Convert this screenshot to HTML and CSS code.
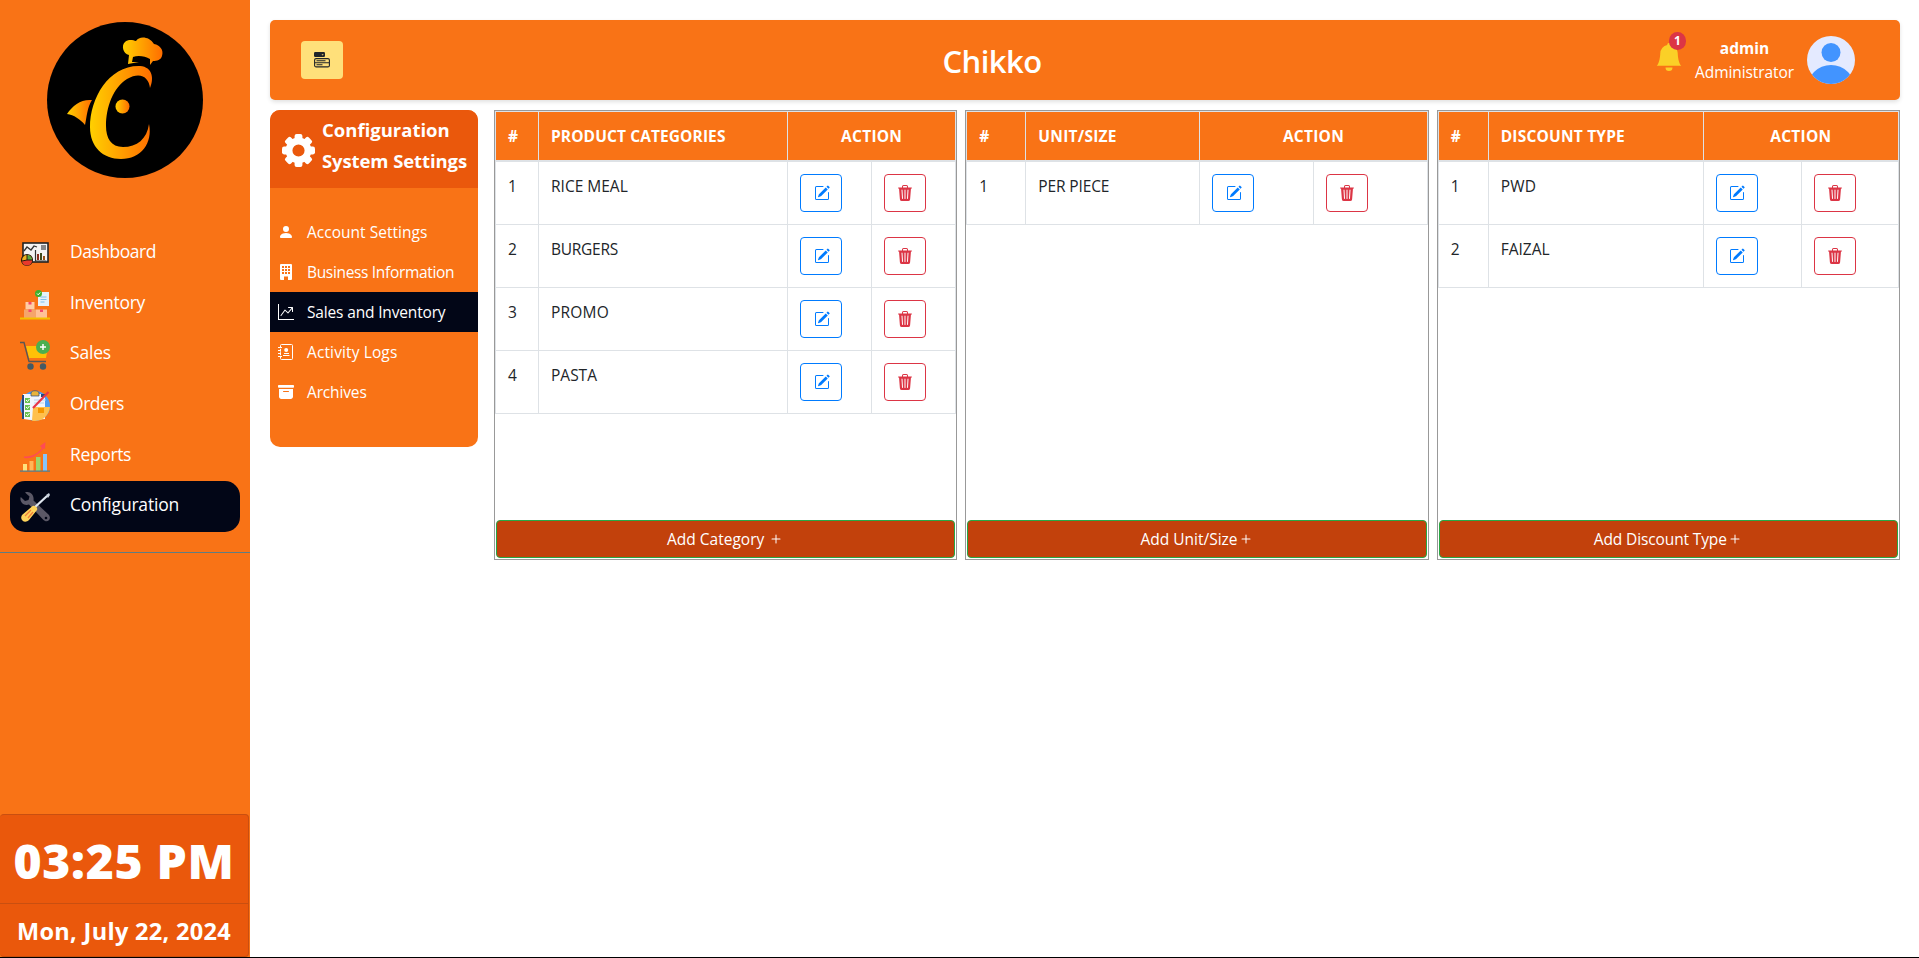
FILE: index.html
```html
<!DOCTYPE html>
<html lang="en">
<head>
<meta charset="utf-8">
<title>Chikko</title>
<link rel="stylesheet" href="styles.css">
</head>
<body>
<svg class="sprite" width="0" height="0" aria-hidden="true">
  <symbol id="edit" viewBox="0 0 16 16"><path d="M15.502 1.94a.5.5 0 0 1 0 .706L14.459 3.69l-2-2L13.502.646a.5.5 0 0 1 .707 0l1.293 1.293zm-1.75 2.456-2-2L4.939 9.21a.5.5 0 0 0-.121.196l-.805 2.414a.25.25 0 0 0 .316.316l2.414-.805a.5.5 0 0 0 .196-.12l6.813-6.814z"/><path d="M1 13.5A1.5 1.5 0 0 0 2.5 15h11a1.5 1.5 0 0 0 1.5-1.5v-6a.5.5 0 0 0-1 0v6a.5.5 0 0 1-.5.5h-11a.5.5 0 0 1-.5-.5v-11a.5.5 0 0 1 .5-.5H9a.5.5 0 0 0 0-1H2.5A1.5 1.5 0 0 0 1 2.5v11z"/></symbol>
  <symbol id="trash" viewBox="0 0 16 16"><path d="M11 1.5v1h3.5a.5.5 0 0 1 0 1h-.538l-.853 10.66A2 2 0 0 1 11.115 16h-6.23a2 2 0 0 1-1.994-1.84L2.038 3.5H1.5a.5.5 0 0 1 0-1H5v-1A1.5 1.5 0 0 1 6.5 0h3A1.5 1.5 0 0 1 11 1.5Zm-5 0v1h4v-1a.5.5 0 0 0-.5-.5h-3a.5.5 0 0 0-.5.5ZM4.5 5.029l.5 8.5a.5.5 0 1 0 .998-.06l-.5-8.5a.5.5 0 1 0-.998.06Zm6.53-.528a.5.5 0 0 0-.528.47l-.5 8.5a.5.5 0 0 0 .998.058l.5-8.5a.5.5 0 0 0-.47-.528ZM8 4.5a.5.5 0 0 0-.5.5v8.5a.5.5 0 0 0 1 0V5a.5.5 0 0 0-.5-.5Z"/></symbol>
  <symbol id="plus" viewBox="0 0 16 16"><path d="M8 3.5a.5.5 0 0 1 .5.5v3.5H12a.5.5 0 0 1 0 1H8.500V12a.5.5 0 0 1-1 0V8.500H4a.5.5 0 0 1 0-1h3.500V4a.5.5 0 0 1 .5-.5z"/></symbol>
</svg>
<div class="shell">
  <aside class="sidebar">
    <svg class="logo" viewBox="0 0 156 156">
      <defs>
        <linearGradient id="g"><stop offset="0" stop-color="#ffd000"/><stop offset="1" stop-color="#ff6d00"/></linearGradient>
      </defs>
      <circle cx="78" cy="78" r="78"/>
      <path fill="url(#g)" d="M103 66C107 57 106 45 93 44C62 43 43 76 43 105C43 125 56 137 74 137C94 137 106 121 102 102C100 117 90 125 76 125C64 125 59 116 59 104C59 85 66 66 80 57C94 49 102 56 103 66Z"/>
      <path fill="url(#g)" d="M20 92C26 83 34 77 45 78C40 86 40 94 38 103C33 97 27 93 20 92Z"/>
      <circle cx="75.500" cy="84.500" r="7" fill="url(#g)"/>
      <path fill="url(#g)" d="M82 33C76 32 74 23 78 20C81 17 86 18 89 19C92 14 102 14 107 22C113 23 117 28 115 34C114 38 110 39 106 39L103 43L103 37C98 34 91 33 86 35L85 40L92 40L81 42Z"/>
    </svg>
    <nav class="menu">
      <a class="menu-item"><svg viewBox="0 0 30 30"><rect x="3" y="4" width="25" height="19" fill="#f4f3f3" stroke="#222" stroke-width="1.600"/><path d="M4 12l3-4 4 3 3-4 3 1" fill="none" stroke="#333" stroke-width="1.300"/><path d="M21 6h5v5h-5z" fill="#888"/><path d="M15.500 11v11h11" fill="none" stroke="#333" stroke-width="1.200"/><path d="M17 15h2v6h-2z" fill="#8b2c20"/><path d="M20 14h2v7h-2z" fill="#3d4a1c"/><path d="M23 17h2v4h-2z" fill="#995018"/><circle cx="7" cy="21" r="5.500" fill="#f0b21d" stroke="#2a1a10" stroke-width="1.200"/><path d="M7 21V16a5 5 0 0 1 5 5z" fill="#57a83f"/><path d="M2 22l5-1h5a5 5 0 0 1-10 1z" fill="#e8392c"/><path d="M7 16v5h5M7 21l-5 1" fill="none" stroke="#2a1a10"/></svg><span class="t-dashboard">Dashboard</span></a>
      <a class="menu-item"><svg viewBox="0 0 30 30"><path d="M18 2h11v14H18z" fill="#e4f1fb"/><path d="M20.500 7h6M20.500 9.500h6M20.500 12h4" stroke="#7fc0ee" stroke-width="1.100"/><circle cx="18.500" cy="3.500" r="3.500" fill="#3fb02c"/><path d="M17 3.500l1.200 1.300 2-2.300" fill="none" stroke="#fff"/><path d="M5.500 12h9v7.500h-9z" fill="#ffcda4"/><path d="M4 19.500h12V28H4z" fill="#f5a56b"/><path d="M16 19.500h11V28H16z" fill="#ffc196"/><path d="M8.500 12h3v2.500h-3zM8.500 19.500h3V22h-3zM20 19.500h3V22h-3z" fill="#f4476b"/><path d="M0 27.500h30v2H0z" fill="#f5c000"/></svg><span class="t-inventory">Inventory</span></a>
      <a class="menu-item"><svg viewBox="0 0 30 30"><path d="M6 6h22l-2 12H9z" fill="#ffc107"/><path d="M0 2.500h4l5 19h17" fill="none" stroke="#5c5752" stroke-width="1.400"/><circle cx="10.500" cy="26.500" r="3.200" fill="#455a64"/><circle cx="23" cy="26.500" r="3.200" fill="#455a64"/><circle cx="23" cy="7" r="7" fill="#4caf50"/><path d="M20 7h6M23 4v6" stroke="#fff" stroke-width="1.500"/></svg><span class="t-sales">Sales</span></a>
      <a class="menu-item"><svg viewBox="0 0 30 30"><circle cx="15" cy="15" r="15" fill="#4d9cf5"/><path d="M3 3h22v25l-14 1-8-1z" fill="#f2f6fc"/><path d="M2 4h2v24H2zM21 3h4v3h-4z" fill="#29497c"/><path d="M13 16h16.900A15 15 0 0 1 12 29.700z" fill="#ffc04d"/><path d="M18 17h6v5h-6z" fill="#f59600"/><path d="M14 9h12M14 12h10" stroke="#b5d0ee"/><path d="M5 7h5v5H5zM5 14h5v5H5zM5 21h5v5H5z" fill="#6ac04f"/><path d="M6 9l1.500 1.500L9.500 8M6 16l1.500 1.500L9.500 15M6 23l1.500 1.500L9.500 22" fill="none" stroke="#fff"/><path d="M11 5V2c0-3 8-3 8 0v3z" fill="#e9b43b" stroke="#29497c" stroke-width=".7"/><path d="M13 17L28.500 1" stroke="#e83648" stroke-width="2.200"/></svg><span class="t-orders">Orders</span></a>
      <a class="menu-item"><svg viewBox="0 0 30 30"><path d="M3 22h4v7H3z" fill="#ffe07a"/><path d="M9.500 19h4v10h-4z" fill="#ffb657"/><path d="M16 15h4.500v14H16z" fill="#9ed56b"/><path d="M23 12h4v17h-4z" fill="#87c5f7"/><path d="M0 28.500h30v1.200H0z" fill="#4b7f96"/><path d="M4 14.500C13 15 18 11 22 6L20 4l5.500-4-.5 7-1.500-.5C18 13 12 17 4 16z" fill="#ff4b55"/></svg><span class="t-reports">Reports</span></a>
      <a class="menu-item active"><svg viewBox="0 0 30 30"><path d="M5 .5L9.500 4.500 8.500 8 5 9 .8 5C-1 10 4 14.500 9 12.500L23 27.500c4 4.500 9.500-.5 5.500-5L13.500 8.500C14.500 3 10-1.500 5 .5z" fill="#5b5866"/><circle cx="26" cy="26" r="1.300" fill="#020617"/><path d="M14 16L27 4" stroke="#dfe6ef" stroke-width="2.200"/><path d="M26 3l3-2 1 2-2 3z" fill="#cbd3df"/><path d="M12 14.500C13.500 12.500 18.500 15.500 17 18L9 28c-4 4-10 0-7-5z" fill="#ffd45c"/><path d="M5 24l6-6M8 26l5-6" stroke="#ef7d3b" stroke-width="1.300"/></svg><span class="t-config">Configuration</span></a>
    </nav>
    <div class="clock">
      <div class="time"><span class="t-time">03:25 PM</span></div>
      <div class="date"><span class="t-date">Mon, July 22, 2024</span></div>
    </div>
  </aside>
  <main class="main">
    <header class="topbar">
      <button class="toggle"><svg viewBox="0 0 16 16"><rect x="0" y="0" width="11" height="5" rx="1.200"/><path d="M7.500 2.200h2.200L8.600 3.400z" fill="#ffe07a"/><rect x=".6" y="6.600" width="14.800" height="8.300" rx="1.500" fill="none" stroke="#212529" stroke-width="1.100"/><path d="M2.500 8.800h9M1 10.800h14M2.500 12.800h6" stroke="#212529" stroke-width="1.100"/></svg></button>
      <h1 class="brand"><span class="t-brand">Chikko</span></h1>
      <div class="user">
        <div class="bell"><svg viewBox="0 0 16 16"><path d="M8 16a2 2 0 0 0 2-2H6a2 2 0 0 0 2 2zm.995-14.901a1 1 0 1 0-1.990 0A5.002 5.002 0 0 0 3 6c0 1.098-.5 6-2 7h14c-1.500-1-2-5.902-2-7 0-2.420-1.720-4.440-4.005-4.901z"/></svg><span class="badge">1</span></div>
        <div class="who"><b class="t-admin">admin</b><span class="t-role">Administrator</span></div>
        <svg class="avatar" viewBox="0 0 48 48"><clipPath id="c"><circle cx="24" cy="24" r="24"/></clipPath><g clip-path="url(#c)"><path d="M0 0h48v48H0z" fill="#e4eaff"/><circle cx="24" cy="16.500" r="9.500" fill="#4294ff"/><circle cx="24" cy="53" r="24" fill="#4294ff"/></g></svg>
      </div>
    </header>
    <div class="content">
      <section class="settings">
        <div class="settings-head">
          <svg class="gear" viewBox="0 0 32 32"><circle cx="16" cy="16" r="9.200" fill="none" stroke="#fff" stroke-width="6.600"/><g fill="#fff"><rect id="tooth" x="12.200" y="0" width="7.600" height="7" rx="2"/><use href="#tooth" transform="rotate(45 16 16)"/><use href="#tooth" transform="rotate(90 16 16)"/><use href="#tooth" transform="rotate(135 16 16)"/><use href="#tooth" transform="rotate(180 16 16)"/><use href="#tooth" transform="rotate(225 16 16)"/><use href="#tooth" transform="rotate(270 16 16)"/><use href="#tooth" transform="rotate(315 16 16)"/></g></svg>
          <div class="settings-title"><span class="t-sc">Configuration</span><span class="t-ss">System Settings</span></div>
        </div>
        <ul class="settings-list">
          <li><svg viewBox="0 0 16 16"><path d="M3 14s-1 0-1-1 1-4 6-4 6 3 6 4-1 1-1 1H3Zm5-6a3 3 0 1 0 0-6 3 3 0 0 0 0 6Z"/></svg><span class="t-acc">Account Settings</span></li>
          <li><svg viewBox="0 0 16 16"><path fill-rule="evenodd" d="M3 0a1 1 0 0 0-1 1v14a1 1 0 0 0 1 1h3v-3.500h4V16h3a1 1 0 0 0 1-1V1a1 1 0 0 0-1-1H3ZM4 2h2v2H4zM7 2h2v2H7zM10 2h2v2h-2zM4 5h2v2H4zM7 5h2v2H7zM10 5h2v2h-2zM4 8h2v2H4zM7 8h2v2H7zM10 8h2v2h-2z"/></svg><span class="t-biz">Business Information</span></li>
          <li class="active"><svg viewBox="0 0 16 16"><path d="M0 0h1v15h15v1H0V0Zm10 3.500a.5.5 0 0 1 .5-.5h4a.5.5 0 0 1 .5.5v4a.5.5 0 0 1-1 0V4.900l-3.613 4.417a.5.5 0 0 1-.74.037L7.060 6.767l-3.656 5.027a.5.5 0 0 1-.808-.588l4-5.500a.5.5 0 0 1 .758-.06l2.609 2.610L13.445 4H10.500a.5.5 0 0 1-.5-.5Z"/></svg><span class="t-si">Sales and Inventory</span></li>
          <li><svg viewBox="0 0 16 16"><path d="M2.500 3V1.500a1 1 0 0 1 1-1h10a1 1 0 0 1 1 1v13a1 1 0 0 1-1 1h-10a1 1 0 0 1-1-1V13M2.500 4.800v1.500M2.500 7.300v1.500M2.500 9.800v1.500" fill="none" stroke="#fff"/><path d="M0 3.500h4M0 6.500h3M0 9.500h3M0 12.500h4M6 9.500h5M5 11.500h6.500" stroke="#fff"/><circle cx="8.200" cy="6" r="2"/></svg><span class="t-act">Activity Logs</span></li>
          <li><svg viewBox="0 0 16 16"><path fill-rule="evenodd" d="M12.643 15C13.979 15 15 13.845 15 12.500V5H1v7.500C1 13.845 2.021 15 3.357 15h9.286zM5.500 7h5a.5.5 0 0 1 0 1h-5a.5.5 0 0 1 0-1zM.8 1a.8.8 0 0 0-.8.8V3a.8.8 0 0 0 .8.8h14.400A.8.8 0 0 0 16 3V1.800a.8.8 0 0 0-.8-.8H.8z"/></svg><span class="t-arc">Archives</span></li>
        </ul>
      </section>
      <section class="panel">
        <table class="grid categories">
          <colgroup><col class="c1"><col class="c2"><col class="c3"><col></colgroup>
          <thead><tr><th>#</th><th><span class="t-pc">PRODUCT CATEGORIES</span></th><th colspan="2" class="center"><span class="t-action">ACTION</span></th></tr></thead>
          <tbody>
            <tr><td>1</td><td><span class="t-rice">RICE MEAL</span></td><td><button class="btn edit"><svg><use href="#edit"/></svg></button></td><td><button class="btn del"><svg><use href="#trash"/></svg></button></td></tr>
            <tr><td>2</td><td><span class="t-burg">BURGERS</span></td><td><button class="btn edit"><svg><use href="#edit"/></svg></button></td><td><button class="btn del"><svg><use href="#trash"/></svg></button></td></tr>
            <tr><td>3</td><td><span class="t-promo">PROMO</span></td><td><button class="btn edit"><svg><use href="#edit"/></svg></button></td><td><button class="btn del"><svg><use href="#trash"/></svg></button></td></tr>
            <tr><td>4</td><td><span class="t-pasta">PASTA</span></td><td><button class="btn edit"><svg><use href="#edit"/></svg></button></td><td><button class="btn del"><svg><use href="#trash"/></svg></button></td></tr>
          </tbody>
        </table>
        <button class="add spaced"><span class="t-addc">Add Category</span><svg><use href="#plus"/></svg></button>
      </section>
      <section class="panel">
        <table class="grid units">
          <colgroup><col class="c1"><col class="c2"><col class="c3"><col></colgroup>
          <thead><tr><th>#</th><th><span class="t-unit">UNIT/SIZE</span></th><th colspan="2" class="center"><span class="t-action">ACTION</span></th></tr></thead>
          <tbody>
            <tr><td>1</td><td><span class="t-per">PER PIECE</span></td><td><button class="btn edit"><svg><use href="#edit"/></svg></button></td><td><button class="btn del"><svg><use href="#trash"/></svg></button></td></tr>
          </tbody>
        </table>
        <button class="add"><span class="t-addu">Add Unit/Size</span><svg><use href="#plus"/></svg></button>
      </section>
      <section class="panel">
        <table class="grid discounts">
          <colgroup><col class="c1"><col class="c2"><col class="c3"><col></colgroup>
          <thead><tr><th>#</th><th><span class="t-disc">DISCOUNT TYPE</span></th><th colspan="2" class="center"><span class="t-action">ACTION</span></th></tr></thead>
          <tbody>
            <tr><td>1</td><td><span class="t-pwd">PWD</span></td><td><button class="btn edit"><svg><use href="#edit"/></svg></button></td><td><button class="btn del"><svg><use href="#trash"/></svg></button></td></tr>
            <tr><td>2</td><td><span class="t-faizal">FAIZAL</span></td><td><button class="btn edit"><svg><use href="#edit"/></svg></button></td><td><button class="btn del"><svg><use href="#trash"/></svg></button></td></tr>
          </tbody>
        </table>
        <button class="add"><span class="t-addd">Add Discount Type</span><svg><use href="#plus"/></svg></button>
      </section>
    </div>
  </main>
</div>
</body>
</html>
```
FILE: styles.css
```css
* { box-sizing: border-box; }
body { margin: 0; background: #fff; color: #212529; font: 15.5px/24px "Open Sans", "Noto Sans", sans-serif; }
h1, ul { margin: 0; padding: 0; }
button { font: inherit; cursor: pointer; }
.sprite { position: absolute; }
.shell { display: flex; height: 958px; border-bottom: 1px solid #000; overflow: hidden; }

.sidebar { width: 250px; flex: none; display: flex; flex-direction: column; background: #f97316; color: #fff; }
.logo { display: block; width: 156px; height: 156px; margin: 22px 0 0 47px; }
.menu { margin-top: 50px; padding: 0 10px 20px; border-bottom: 1px solid #5f7d83; font-size: 17.5px; }
.menu-item { display: flex; align-items: flex-start; height: 50.67px; padding: 11px 10px 0; border-radius: 15px; }
.menu-item svg { width: 30px; height: 30px; margin-right: 20px; overflow: visible; }
.menu-item.active { background: #020617; }
.clock { margin-top: auto; width: 249px; height: 143px; background: #ea580c; border: 1px solid #c94f10; border-left: 0; border-radius: 4px; }
.time { height: 89px; padding-top: 4px; display: flex; align-items: center; justify-content: center; border-bottom: 1px solid #c94f10; font-size: 48px; font-weight: 800; white-space: nowrap; }
.date { height: 53px; display: flex; align-items: center; justify-content: center; font-size: 23.5px; font-weight: 700; white-space: nowrap; }

.main { flex: 1; padding: 20px 19px 0 20px; min-width: 0; }
.topbar { display: flex; justify-content: space-between; align-items: center; height: 80px; padding: 0 45px 0 31px; background: #f97316; border-radius: 5px; box-shadow: 0 2px 4px rgba(0,0,0,.12); color: #fff; }
.toggle { display: flex; align-items: center; justify-content: center; width: 42px; height: 38px; padding: 0; border: 0; border-radius: 4px; background: #ffe07a; }
.toggle svg { width: 16px; height: 16px; fill: #212529; }
.brand { font-size: 31px; font-weight: 600; line-height: 40px; padding-top: 2px; }
.user { display: flex; justify-content: flex-end; align-items: center; padding-left: 14px; }
.bell { position: relative; width: 28px; height: 28px; margin: 0 12px 6px 0; }
.bell svg { display: block; width: 28px; height: 28px; fill: #fbd027; }
.badge { position: absolute; left: 14px; top: -11px; width: 17px; height: 18px; border-radius: 9px; background: #dc3545; font-size: 12px; line-height: 18px; font-weight: 700; text-align: center; }
.who { display: flex; flex-direction: column; align-items: center; }
.avatar { width: 48px; height: 48px; margin-left: 13px; }

.content { display: flex; align-items: flex-start; margin-top: 10px; }
.settings { width: 208px; height: 337px; flex: none; margin-right: 16px; border-radius: 10px; overflow: hidden; background: #f97316; color: #fff; }
.settings-head { display: flex; align-items: center; height: 78px; padding: 0 0 0 12px; background: #ea580c; }
.gear { width: 33px; height: 33px; margin: 2px 7px 0 0; }
.settings-title { display: flex; flex-direction: column; align-items: flex-start; font-size: 18.5px; font-weight: 700; line-height: 31px; margin-bottom: 8px; white-space: nowrap; }
.settings-list { list-style: none; padding-top: 24px; }
.settings-list li { display: flex; align-items: center; height: 40px; padding-left: 8px; white-space: nowrap; }
.settings-list svg { width: 16px; height: 16px; margin-right: 13px; fill: #fff; }
.settings-list .active { background: #020617; }

.panel { flex: 1; min-width: 0; height: 450px; display: flex; flex-direction: column; justify-content: space-between; border: 1px solid #999; }
.panel + .panel { margin-left: 8px; }
.grid { width: 100%; table-layout: fixed; border-collapse: collapse; }
.grid th, .grid td { border: 1px solid #dee2e6; padding: 12px; text-align: left; vertical-align: top; }
.grid th { background: #f97316; color: #fff; border-bottom-width: 2px; }
.grid .center { text-align: center; }
.categories .c1 { width: 43px; } .categories .c2 { width: 249px; } .categories .c3 { width: 84px; }
.units .c1 { width: 59px; } .units .c2 { width: 174px; } .units .c3 { width: 114px; }
.discounts .c1 { width: 50px; } .discounts .c2 { width: 215px; } .discounts .c3 { width: 98px; }
.btn { display: flex; align-items: center; justify-content: center; width: 42px; height: 38px; padding: 0; border-radius: 4px; background: #fff; }
.btn svg, .add svg { width: 16px; height: 16px; }
.edit { padding-left: 1px; border: 1px solid #007bff; fill: #007bff; }
.del { border: 1px solid #dc3545; fill: #dc3545; }
.add { display: flex; align-items: center; justify-content: center; height: 38px; margin: 0 1px 1px; padding: 0; border: 1px solid #28a745; border-radius: 4px; background: #c2410c; color: #fff; fill: #fff; }
.spaced svg { margin-left: 4px; }

/* Tracking per label */
.t-dashboard, .t-orders { letter-spacing: -.48px; }
.t-inventory { letter-spacing: -.29px; }
.t-sales, .t-config { letter-spacing: -.2px; }
.t-reports { letter-spacing: -.37px; }
.t-time { letter-spacing: .7px; }
.t-date { letter-spacing: .32px; }
.t-brand { letter-spacing: -.57px; }
.t-role { letter-spacing: -.08px; }
.t-ss { letter-spacing: -.1px; }
.t-acc { letter-spacing: .02px; }
.t-biz { letter-spacing: -.33px; }
.t-si { letter-spacing: -.16px; }
.t-act { letter-spacing: .12px; }
.t-arc { letter-spacing: -.15px; }
.t-pc { letter-spacing: .1px; }
.t-action, .t-unit { letter-spacing: .25px; }
.t-burg { letter-spacing: -.26px; }
.t-promo, .t-pwd { letter-spacing: .2px; }
.t-per { letter-spacing: -.13px; }
.t-disc { letter-spacing: .2px; }
.t-addd { letter-spacing: -.13px; }
```
